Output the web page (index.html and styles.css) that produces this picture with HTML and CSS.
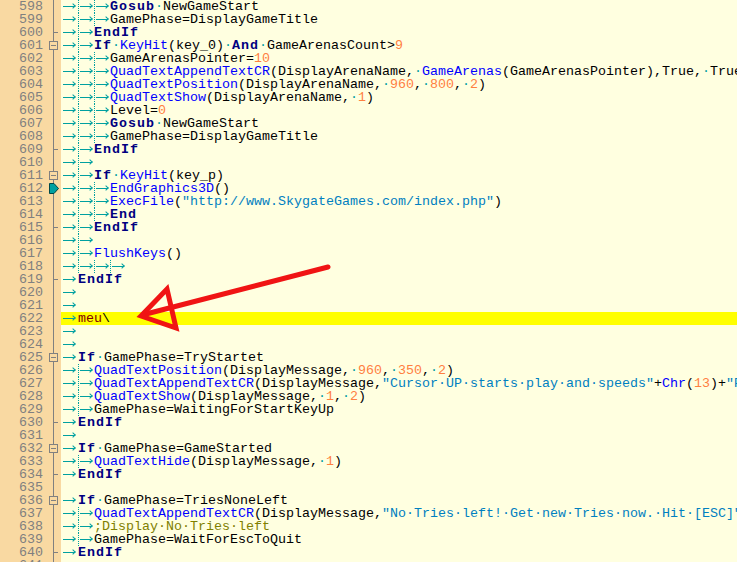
FILE: index.html
```html
<!DOCTYPE html>
<html>
<head>
<meta charset="utf-8">
<link rel="stylesheet" href="styles.css">
</head>
<body>
<div class="editor">
<div class="line"><span class="num">598</span><span class="fold"></span><span class="code"><span class="t"></span><span class="t g"></span><span class="t g"></span><span class="k">Gosub</span><span class="s">·</span>NewGameStart</span></div>
<div class="line"><span class="num">599</span><span class="fold"></span><span class="code"><span class="t"></span><span class="t g"></span><span class="t g"></span>GamePhase=DisplayGameTitle</span></div>
<div class="line"><span class="num">600</span><span class="fold end"></span><span class="code"><span class="t"></span><span class="t g"></span><span class="k">EndIf</span></span></div>
<div class="line"><span class="num">601</span><span class="fold box"></span><span class="code"><span class="t"></span><span class="t g"></span><span class="k">If</span><span class="s">·</span><span class="f">KeyHit</span>(key_0)<span class="s">·</span><span class="k">And</span><span class="s">·</span>GameArenasCount&gt;<span class="n">9</span></span></div>
<div class="line"><span class="num">602</span><span class="fold"></span><span class="code"><span class="t"></span><span class="t g"></span><span class="t g"></span>GameArenasPointer=<span class="n">10</span></span></div>
<div class="line"><span class="num">603</span><span class="fold"></span><span class="code"><span class="t"></span><span class="t g"></span><span class="t g"></span><span class="f">QuadTextAppendTextCR</span>(DisplayArenaName,<span class="s">·</span><span class="f">GameArenas</span>(GameArenasPointer),True,<span class="s">·</span>True,<span class="s">·</span><span class="n">1</span>)</span></div>
<div class="line"><span class="num">604</span><span class="fold"></span><span class="code"><span class="t"></span><span class="t g"></span><span class="t g"></span><span class="f">QuadTextPosition</span>(DisplayArenaName,<span class="s">·</span><span class="n">960</span>,<span class="s">·</span><span class="n">800</span>,<span class="s">·</span><span class="n">2</span>)</span></div>
<div class="line"><span class="num">605</span><span class="fold"></span><span class="code"><span class="t"></span><span class="t g"></span><span class="t g"></span><span class="f">QuadTextShow</span>(DisplayArenaName,<span class="s">·</span><span class="n">1</span>)</span></div>
<div class="line"><span class="num">606</span><span class="fold"></span><span class="code"><span class="t"></span><span class="t g"></span><span class="t g"></span>Level=<span class="n">0</span></span></div>
<div class="line"><span class="num">607</span><span class="fold"></span><span class="code"><span class="t"></span><span class="t g"></span><span class="t g"></span><span class="k">Gosub</span><span class="s">·</span>NewGameStart</span></div>
<div class="line"><span class="num">608</span><span class="fold"></span><span class="code"><span class="t"></span><span class="t g"></span><span class="t g"></span>GamePhase=DisplayGameTitle</span></div>
<div class="line"><span class="num">609</span><span class="fold end"></span><span class="code"><span class="t"></span><span class="t g"></span><span class="k">EndIf</span></span></div>
<div class="line"><span class="num">610</span><span class="fold"></span><span class="code"><span class="t"></span><span class="t g"></span></span></div>
<div class="line"><span class="num">611</span><span class="fold box"></span><span class="code"><span class="t"></span><span class="t g"></span><span class="k">If</span><span class="s">·</span><span class="f">KeyHit</span>(key_p)</span></div>
<div class="line"><span class="num">612</span><span class="fold mark"><svg class="marker" width="10" height="11" viewBox="0 0 10 11"><path d="M0.5 0.5 H5 L9.5 5.5 L5 10.5 H0.5 Z" fill="#00a0a0" stroke="#004848" stroke-width="1"/></svg></span><span class="code"><span class="t"></span><span class="t g"></span><span class="t g"></span><span class="f">EndGraphics3D</span>()</span></div>
<div class="line"><span class="num">613</span><span class="fold"></span><span class="code"><span class="t"></span><span class="t g"></span><span class="t g"></span><span class="f">ExecFile</span>(<span class="q">"http://www.SkygateGames.com/index.php"</span>)</span></div>
<div class="line"><span class="num">614</span><span class="fold"></span><span class="code"><span class="t"></span><span class="t g"></span><span class="t g"></span><span class="k">End</span></span></div>
<div class="line"><span class="num">615</span><span class="fold end"></span><span class="code"><span class="t"></span><span class="t g"></span><span class="k">EndIf</span></span></div>
<div class="line"><span class="num">616</span><span class="fold"></span><span class="code"><span class="t"></span><span class="t g"></span></span></div>
<div class="line"><span class="num">617</span><span class="fold"></span><span class="code"><span class="t"></span><span class="t g"></span><span class="f">FlushKeys</span>()</span></div>
<div class="line"><span class="num">618</span><span class="fold"></span><span class="code"><span class="t"></span><span class="t g"></span><span class="t g"></span><span class="t g"></span></span></div>
<div class="line"><span class="num">619</span><span class="fold end"></span><span class="code"><span class="t"></span><span class="k">EndIf</span></span></div>
<div class="line"><span class="num">620</span><span class="fold"></span><span class="code"><span class="t"></span></span></div>
<div class="line"><span class="num">621</span><span class="fold"></span><span class="code"><span class="t"></span></span></div>
<div class="line"><span class="num">622</span><span class="fold"></span><span class="code hl"><span class="t"></span><span class="r">meu</span>\</span></div>
<div class="line"><span class="num">623</span><span class="fold"></span><span class="code"><span class="t"></span></span></div>
<div class="line"><span class="num">624</span><span class="fold"></span><span class="code"><span class="t"></span></span></div>
<div class="line"><span class="num">625</span><span class="fold box"></span><span class="code"><span class="t"></span><span class="k">If</span><span class="s">·</span>GamePhase=TryStartet</span></div>
<div class="line"><span class="num">626</span><span class="fold"></span><span class="code"><span class="t"></span><span class="t g"></span><span class="f">QuadTextPosition</span>(DisplayMessage,<span class="s">·</span><span class="n">960</span>,<span class="s">·</span><span class="n">350</span>,<span class="s">·</span><span class="n">2</span>)</span></div>
<div class="line"><span class="num">627</span><span class="fold"></span><span class="code"><span class="t"></span><span class="t g"></span><span class="f">QuadTextAppendTextCR</span>(DisplayMessage,<span class="q">"Cursor·UP·starts·play·and·speeds"</span>+<span class="f">Chr</span>(<span class="n">13</span>)+<span class="q">"Press·up"</span>)</span></div>
<div class="line"><span class="num">628</span><span class="fold"></span><span class="code"><span class="t"></span><span class="t g"></span><span class="f">QuadTextShow</span>(DisplayMessage,<span class="s">·</span><span class="n">1</span>,<span class="s">·</span><span class="n">2</span>)</span></div>
<div class="line"><span class="num">629</span><span class="fold"></span><span class="code"><span class="t"></span><span class="t g"></span>GamePhase=WaitingForStartKeyUp</span></div>
<div class="line"><span class="num">630</span><span class="fold end"></span><span class="code"><span class="t"></span><span class="k">EndIf</span></span></div>
<div class="line"><span class="num">631</span><span class="fold"></span><span class="code"><span class="t"></span></span></div>
<div class="line"><span class="num">632</span><span class="fold box"></span><span class="code"><span class="t"></span><span class="k">If</span><span class="s">·</span>GamePhase=GameStarted</span></div>
<div class="line"><span class="num">633</span><span class="fold"></span><span class="code"><span class="t"></span><span class="t g"></span><span class="f">QuadTextHide</span>(DisplayMessage,<span class="s">·</span><span class="n">1</span>)</span></div>
<div class="line"><span class="num">634</span><span class="fold end"></span><span class="code"><span class="t"></span><span class="k">EndIf</span></span></div>
<div class="line"><span class="num">635</span><span class="fold"></span><span class="code"></span></div>
<div class="line"><span class="num">636</span><span class="fold box"></span><span class="code"><span class="t"></span><span class="k">If</span><span class="s">·</span>GamePhase=TriesNoneLeft</span></div>
<div class="line"><span class="num">637</span><span class="fold"></span><span class="code"><span class="t"></span><span class="t g"></span><span class="f">QuadTextAppendTextCR</span>(DisplayMessage,<span class="q">"No·Tries·left!·Get·new·Tries·now.·Hit·[ESC]"</span>,<span class="n">1</span>)</span></div>
<div class="line"><span class="num">638</span><span class="fold"></span><span class="code"><span class="t"></span><span class="t g"></span><span class="c">;Display·No·Tries·left</span></span></div>
<div class="line"><span class="num">639</span><span class="fold"></span><span class="code"><span class="t"></span><span class="t g"></span>GamePhase=WaitForEscToQuit</span></div>
<div class="line"><span class="num">640</span><span class="fold end"></span><span class="code"><span class="t"></span><span class="k">EndIf</span></span></div>
<div class="line"><span class="num">641</span><span class="fold"></span><span class="code"></span></div>
</div>
<svg class="annot" width="737" height="562" viewBox="0 0 737 562">
<g fill="none" stroke="#f01414" stroke-width="5" stroke-linejoin="miter" stroke-linecap="round">
<path d="M328 267 L146 314"/>
<path d="M141 316 L167 289 L176 328 Z"/>
</g>
</svg>
</body>
</html>
```
FILE: styles.css
```css
html, body {
  margin: 0;
  padding: 0;
  width: 737px;
  height: 562px;
  overflow: hidden;
  background: #ffffe0;
}
body {
  position: relative;
  font-family: "Liberation Mono", "DejaVu Sans Mono", monospace;
  font-size: 13.333px;
}
.editor {
  display: flex;
  flex-direction: column;
}
.line {
  display: flex;
  height: 13px;
  line-height: 13px;
}
.num {
  flex: 0 0 45px;
  box-sizing: border-box;
  padding-right: 2px;
  text-align: right;
  color: #808080;
  background: #f9d9a2;
}
.fold {
  flex: 0 0 16px;
  position: relative;
  background: linear-gradient(to right, transparent 8px, #808080 8px, #808080 9px, transparent 9px) , #f9d9a2;
}
.fold.end::after {
  content: "";
  position: absolute;
  left: 8px;
  top: 6px;
  width: 5px;
  height: 1px;
  background: #808080;
}
.fold.box::after {
  content: "";
  position: absolute;
  left: 4px;
  top: 2px;
  width: 7px;
  height: 7px;
  border: 1px solid #808080;
  background: linear-gradient(#808080, #808080) center / 5px 1px no-repeat, #f9d9a2;
}
.marker {
  position: absolute;
  left: 4px;
  top: 1px;
}
.code {
  flex: 1 1 auto;
  box-sizing: border-box;
  padding-left: 1px;
  white-space: pre;
  overflow: hidden;
  color: #000000;
  background: #ffffe0;
}
.code.hl {
  background: #ffff00;
}
.t {
  display: inline-block;
  width: 16px;
  height: 13px;
  vertical-align: top;
  position: relative;
}
.t::before {
  content: "";
  position: absolute;
  left: 1px;
  top: 6px;
  width: 12px;
  height: 1px;
  background: #00a0a0;
}
.t::after {
  content: "";
  position: absolute;
  left: 9px;
  top: 4px;
  width: 3px;
  height: 3px;
  border-top: 1px solid #00a0a0;
  border-right: 1px solid #00a0a0;
  transform: rotate(45deg);
}
.t.g {
  background: repeating-linear-gradient(to bottom, #00a0a0 0, #00a0a0 1px, transparent 1px, transparent 2px) 0 0 / 1px 100% no-repeat;
}
.t.g::before {
  left: 2px;
}
.t.g::after {
  left: 10px;
}
.s {
  color: #00a0a0;
}
.k {
  font-weight: bold;
  letter-spacing: 1px;
  color: #000080;
}
.f {
  color: #0000ff;
}
.n {
  color: #ff8040;
}
.q {
  color: #0080c0;
}
.q .s {
  color: #0080c0;
}
.c {
  color: #808000;
}
.r {
  color: #800000;
}
.annot {
  position: absolute;
  left: 0;
  top: 0;
  pointer-events: none;
}
```
